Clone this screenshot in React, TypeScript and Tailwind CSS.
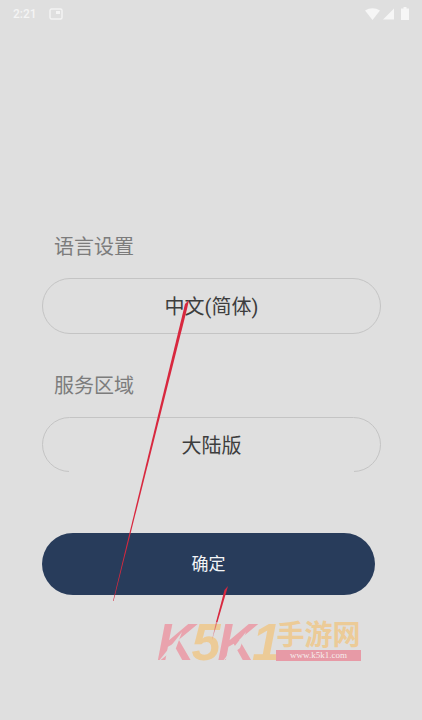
import React from "react";

const cjk = "font-['Roboto','Noto_Sans_CJK_SC',sans-serif]";

function Field({ label, value, labelClass, boxClass, gap }: { label: string; value: string; labelClass: string; boxClass: string; gap?: boolean }) {
  return (
    <div className="flex flex-col">
      <div className={`pl-[12px] text-[20px] leading-[28px] text-[#7c7c7c] ${labelClass}`}>{label}</div>
      <div className={`relative flex w-[339px] items-center justify-center rounded-full border border-[#c4c4c4] pt-[2px] text-[20px] leading-[30px] text-[#3d3d3d] ${boxClass}`}>
        <span>{value}</span>
        {gap && <div className="absolute bottom-[-1px] left-[26px] right-[26px] h-[1px] bg-[#dfdfdf]" />}
      </div>
    </div>
  );
}

export default function App() {
  return (
    <div className={`relative flex h-[720px] w-full flex-col overflow-hidden bg-[#dfdfdf] ${cjk}`}>
      <div className="flex h-[26px] items-center justify-between pl-[13px] pr-[13px] pt-[1px]">
        <div className="flex items-center gap-[12px]">
          <span className="text-[12px] font-medium leading-none text-[#f4f4f4]">2:21</span>
          <svg width="14" height="12" viewBox="0 0 14 12">
            <rect x="1" y="1" width="12" height="10" rx="1.5" fill="none" stroke="#f4f4f4" strokeWidth="1.4" />
            <rect x="7" y="3" width="4" height="3" fill="#f4f4f4" />
          </svg>
        </div>
        <div className="flex items-center gap-[3px]">
          <svg width="15" height="12" viewBox="0 0 15 12"><path d="M0 2.5 Q7.5 -2 15 2.5 L7.5 12 Z" fill="#f6f6f6" /></svg>
          <svg width="11" height="12" viewBox="0 0 11 12"><path d="M0 11.5 L11 0.5 V11.5 Z" fill="#f6f6f6" /></svg>
          <svg width="8" height="13" viewBox="0 0 8 13" className="ml-[4px]"><path d="M2.5 0 H5.5 V1.5 H8 V13 H0 V1.5 H2.5 Z" fill="#f6f6f6" /></svg>
        </div>
      </div>

      <div className="flex flex-col pl-[42px] pt-[207px]">
        <Field label="语言设置" value="中文(简体)" labelClass="mb-[17px]" boxClass="h-[56px]" />
        <div className="h-[38px]" />
        <Field label="服务区域" value="大陆版" labelClass="mb-[17px]" boxClass="h-[55px]" gap />
        <button className="mt-[61px] flex h-[62px] w-[333px] items-center justify-center rounded-full bg-[#283c5b] pt-[2px] text-[17px] text-[#f3f5f7]">
          确定
        </button>
      </div>

      {/* Watermark */}
      <div className="pointer-events-none absolute left-[157px] top-[617px] flex h-[50px] items-center">
        <span className="font-['Liberation_Sans',sans-serif] text-[52px] font-bold italic leading-none tracking-[-3px] text-[#e9a3ad]">K</span>
        <span className="font-['Liberation_Sans',sans-serif] text-[52px] font-bold italic leading-none tracking-[-3px] text-[#eccb97]">5</span>
        <span className="font-['Liberation_Sans',sans-serif] text-[52px] font-bold italic leading-none tracking-[-3px] text-[#e9a3ad]">K</span>
        <span className="font-['Liberation_Sans',sans-serif] text-[52px] font-bold italic leading-none text-[#eccb97]">1</span>
      </div>
      <div className="pointer-events-none absolute left-[276px] top-[622px] flex w-[85px] flex-col items-stretch">
        <div className="h-[28px] text-center text-[28px] font-bold leading-[28px] text-[#eccb97]">手游网</div>
        <div className="h-[11px] bg-[#e79aa6] text-center font-['Liberation_Serif',serif] text-[9px] leading-[11px] text-[#f6ecec]">www.k5k1.com</div>
      </div>

      {/* Touch traces and watermark cuts */}
      <svg className="pointer-events-none absolute left-0 top-0" width="422" height="720" viewBox="0 0 422 720">
        <path d="M158 662 L182 632 L176 648 Z" fill="#dfdfdf" />
        <path d="M222 662 L246 632 L240 648 Z" fill="#dfdfdf" />
        <path d="M189 300 L185 304 L113 601 L113.6 601 L187 309 Z" fill="#d8283f" />
        <path d="M228 586 L224.5 590 L216 622 L217.5 622 L226 593 Z" fill="#d8283f" />
        <path d="M216 622 L212 640 L217.5 622 Z" fill="#d8283f" opacity="0.5" />
      </svg>
    </div>
  );
}
